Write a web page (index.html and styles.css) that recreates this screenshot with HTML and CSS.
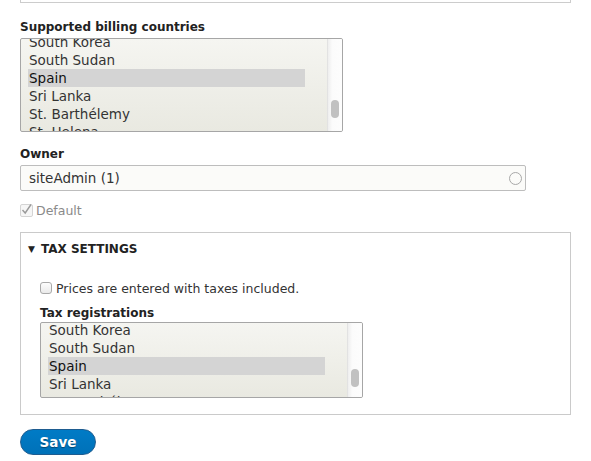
FILE: index.html
```html
<!DOCTYPE html>
<html>
<head>
<meta charset="utf-8">
<link rel="stylesheet" href="styles.css">
</head>
<body>
<div class="page">
  <div class="top-box"></div>

  <div class="form-item billing">
    <div class="label">Supported billing countries</div>
    <div class="listbox lb-billing">
      <div class="options">
        <div class="opt">South Korea</div>
        <div class="opt">South Sudan</div>
        <div class="opt selected">Spain</div>
        <div class="opt">Sri Lanka</div>
        <div class="opt">St. Barthélemy</div>
        <div class="opt">St. Helena</div>
      </div>
      <div class="scrollbar"><div class="thumb"></div></div>
    </div>
  </div>

  <div class="form-item owner">
    <div class="label">Owner</div>
    <div class="text-input">
      <span class="value">siteAdmin (1)</span>
      <span class="throbber"></span>
    </div>
  </div>

  <div class="checkbox-row default-row">
    <span class="check disabled">
      <svg width="13" height="13" viewBox="0 0 13 13"><path d="M2.5 7 L5.2 10 L11 1.5" fill="none" stroke="#9a9a9a" stroke-width="1.4"/></svg>
    </span>
    <span class="check-label muted">Default</span>
  </div>

  <div class="fieldset">
    <div class="legend"><span class="tri">&#9660;</span>TAX SETTINGS</div>
    <div class="fieldset-body">
      <div class="checkbox-row prices-row">
        <span class="check box"></span>
        <span class="check-label">Prices are entered with taxes included.</span>
      </div>
      <div class="form-item taxreg">
        <div class="label">Tax registrations</div>
        <div class="listbox lb-tax">
          <div class="options">
            <div class="opt">South Korea</div>
            <div class="opt">South Sudan</div>
            <div class="opt selected">Spain</div>
            <div class="opt">Sri Lanka</div>
            <div class="opt">St. Barthélemy</div>
          </div>
          <div class="scrollbar"><div class="thumb"></div></div>
        </div>
      </div>
    </div>
  </div>

  <button class="save">Save</button>
</div>
</body>
</html>
```

FILE: styles.css
```css
* { box-sizing: border-box; }
body {
  margin: 0;
  background: #fff;
  font-family: "DejaVu Sans", Verdana, sans-serif;
  font-size: 12px;
  color: #333;
}
.page {
  padding: 0 20px;
  width: 591px;
}
.top-box {
  width: 551px;
  height: 3px;
  border: 1px solid #ccc;
  border-top: none;
}
.label {
  font-weight: bold;
  font-size: 12px;
  color: #222;
  line-height: 16px;
}
.billing { margin-top: 16px; }
.billing .label { margin-bottom: 3px; }

.listbox {
  position: relative;
  width: 323px;
  border: 1px solid #a6a6a6;
  border-radius: 2px;
  background: linear-gradient(#f5f5f1, #e9e9e1);
  overflow: hidden;
  display: flex;
}
.lb-billing { height: 94px; }
.lb-tax { height: 76px; }
.options {
  flex: 1;
  padding: 0 22px 0 7px;
}
.lb-billing .options { margin-top: -6px; }
.lb-tax .options { margin-top: -2px; }
.opt {
  height: 18px;
  line-height: 18px;
  font-size: 13.5px;
  color: #333;
  padding-left: 1px;
}
.opt.selected {
  background: #d4d4d4;
  color: #111;
}
.scrollbar {
  width: 15px;
  flex: none;
  background: linear-gradient(90deg, #eeeeee, #fbfbfb 30%, #fdfdfd);
  border-left: 1px solid #e2e2e2;
  position: relative;
}
.thumb {
  position: absolute;
  left: 3px;
  width: 8px;
  height: 18px;
  border-radius: 4px;
  background: #c1c1c1;
}
.lb-billing .thumb { top: 61px; }
.lb-tax .thumb { top: 46px; }

.owner { margin-top: 14px; }
.owner .label { margin-bottom: 3px; }
.text-input {
  width: 506px;
  height: 26px;
  border: 1px solid #bdbdbd;
  border-radius: 2px;
  background: #fbfbf9;
  display: flex;
  align-items: center;
  justify-content: space-between;
  padding: 0 3px 0 8px;
}
.text-input .value {
  font-size: 13.5px;
  color: #333;
}
.throbber {
  width: 13px;
  height: 13px;
  border: 1.5px solid #a8a8a8;
  border-radius: 50%;
}

.checkbox-row {
  display: flex;
  align-items: center;
}
.default-row { margin-top: 9px; height: 20px; }
.check {
  width: 13px;
  height: 13px;
  flex: none;
}
.check.disabled {
  border: 1px solid #d4d4d4;
  border-radius: 2px;
  background: #f6f6f6;
  position: relative;
}
.check.disabled svg { position: absolute; left: -1px; top: -2px; }
.check-label {
  font-size: 12.5px;
  margin-left: 3px;
}
.muted { color: #8a8a8a; }

.fieldset {
  margin-top: 12px;
  width: 551px;
  height: 183px;
  border: 1px solid #cacaca;
}
.legend {
  font-weight: bold;
  font-size: 12px;
  color: #222;
  padding: 9px 0 0 7px;
  line-height: 14px;
}
.tri {
  font-size: 9px;
  margin-right: 6px;
  position: relative;
  top: -1px;
}
.fieldset-body { padding: 0 19px; }
.prices-row { margin-top: 23px; height: 16px; }
.check.box {
  width: 12px;
  height: 12px;
  border: 1px solid #a9a9a9;
  border-radius: 3px;
  background: linear-gradient(#fdfdfd, #eaeaea);
}
.prices-row .check-label { margin-left: 4px; color: #333; }
.taxreg { margin-top: 9px; }
.taxreg .label { margin-bottom: 1px; }

.save {
  margin-top: 14px;
  width: 76px;
  height: 26px;
  border: 1px solid #1e5c90;
  border-radius: 13px;
  background: linear-gradient(#007bc6, #0071b8);
  color: #fff;
  font-family: "DejaVu Sans", Verdana, sans-serif;
  font-weight: bold;
  font-size: 13.5px;
  text-shadow: 0 1px 1px rgba(0,0,0,0.4);
  padding: 0;
}
```
